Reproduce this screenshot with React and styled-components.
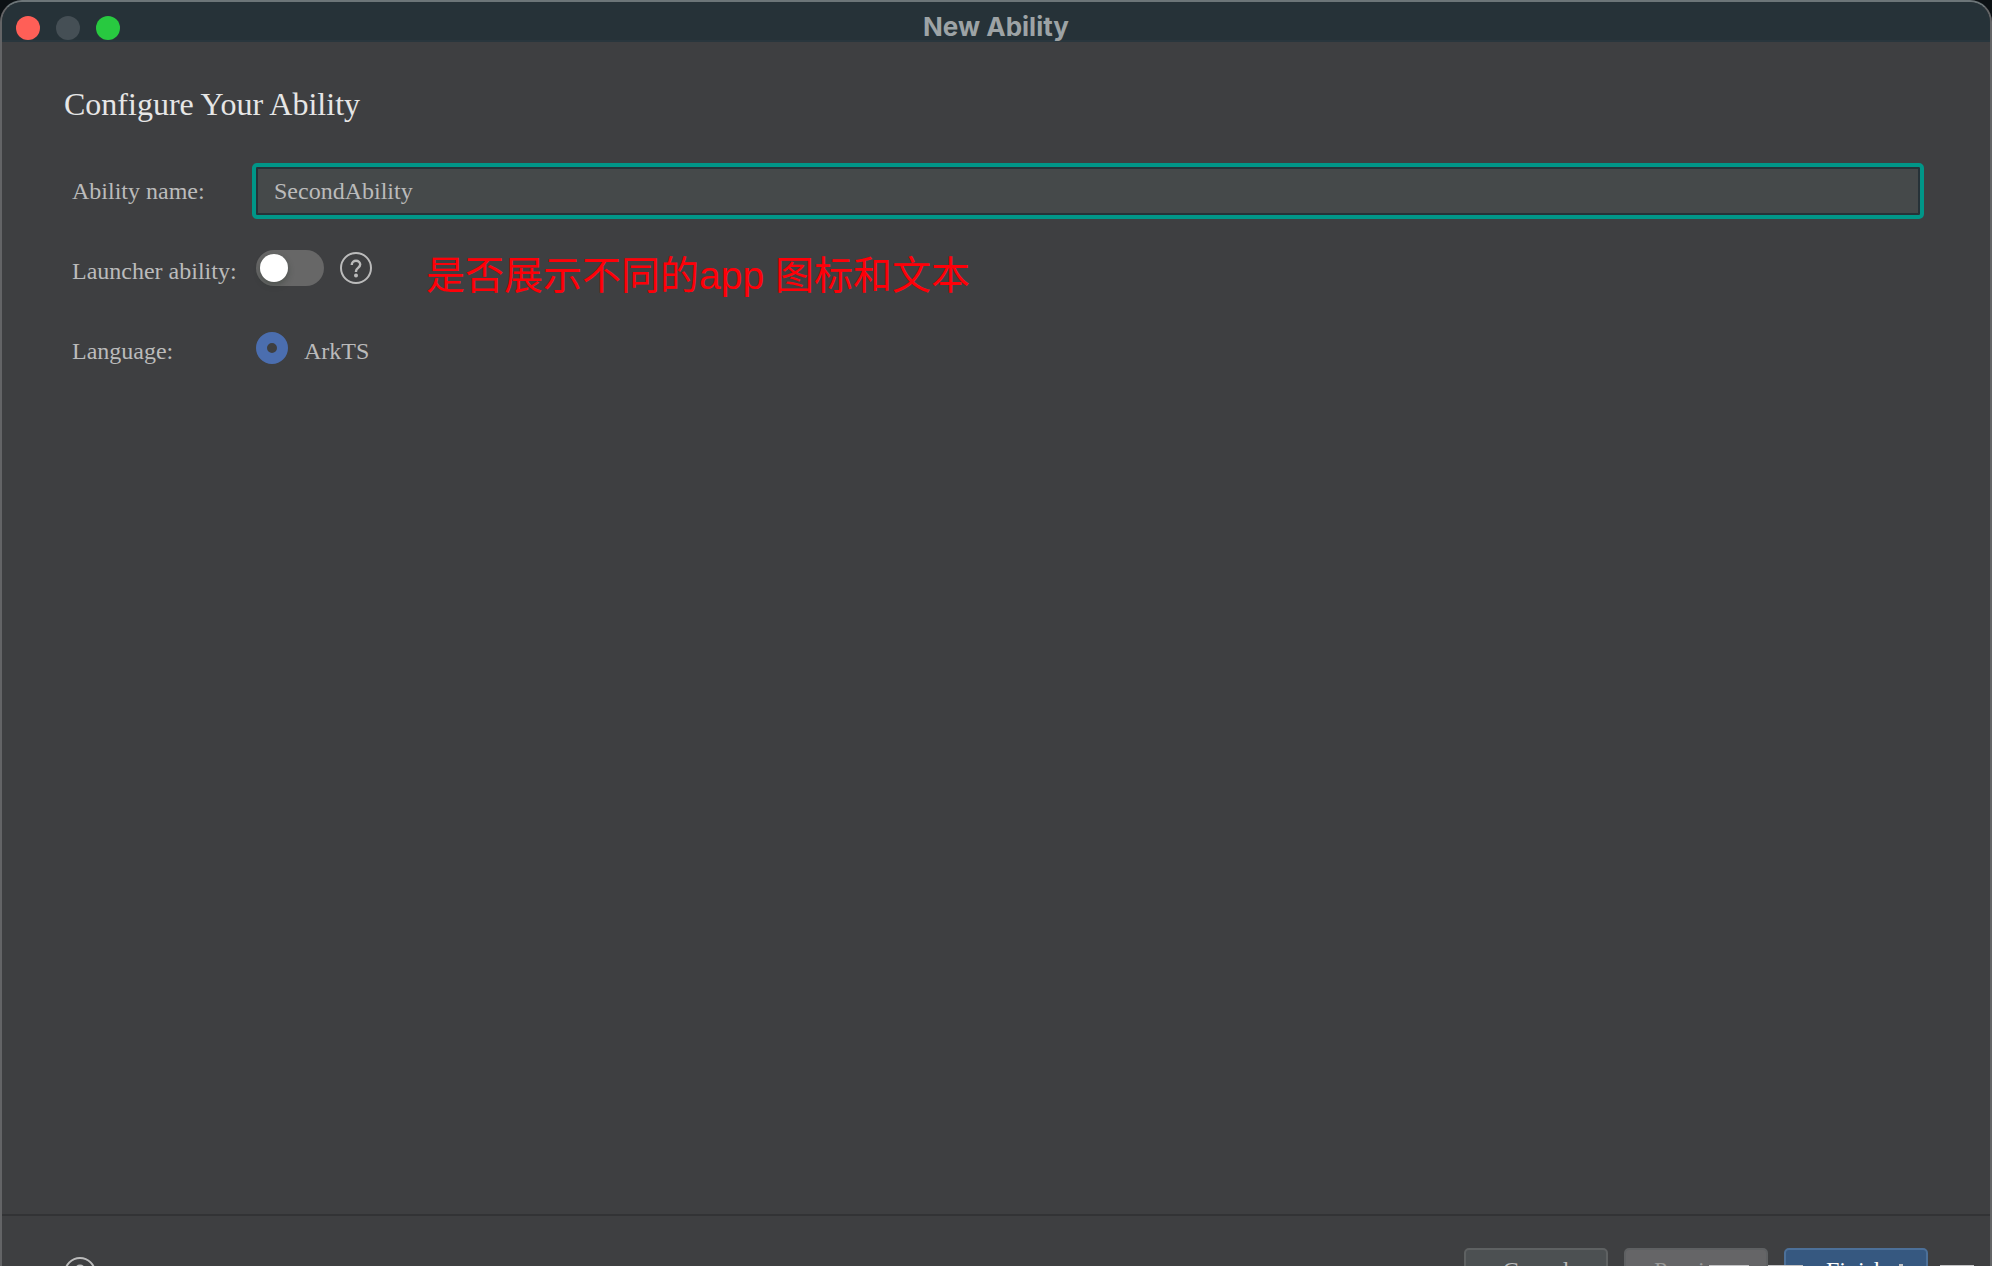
import React, { useState } from "react";
import styled, { createGlobalStyle } from "styled-components";

const serif = `"Liberation Serif", "Times New Roman", serif`;

const GlobalStyle = createGlobalStyle`
  * { box-sizing: border-box; }
  body { margin: 0; background: #0c1114; overflow: hidden; }
`;

const Dialog = styled.div`
  display: flex;
  flex-direction: column;
  height: 100vh;
  overflow: hidden;
  border: 2px solid #636466;
  border-top-color: #6c7578;
  border-bottom: 0;
  border-radius: 22px 22px 0 0;
  background: #3e3f41;
  color: #bbbbbb;
  font: 24px/28px ${serif};
`;

const TitleBar = styled.header`
  display: grid;
  grid-template-columns: 1fr auto 1fr;
  align-items: end;
  flex: none;
  height: 40px;
  padding: 0 14px;
  background: #263238;
  border-bottom: 2px solid #29363d;
`;

const TrafficLights = styled.div`
  display: flex;
  gap: 16px;
`;

const Light = styled.button`
  width: 24px;
  height: 24px;
  padding: 0;
  border: 0;
  border-radius: 50%;
  background: ${(p) => p.$color};
`;

const Title = styled.div`
  color: #9da3a5;
  font: 700 26px/26px Inter, sans-serif;
`;

const Form = styled.form`
  flex: 1;
  padding: 42px 66px 0 62px;
`;

const Heading = styled.h1`
  margin: 0 0 27px;
  color: #e6e6e6;
  font: 400 32px/40px ${serif};
`;

const Row = styled.div`
  display: grid;
  grid-template-columns: 180px 1fr;
  align-items: center;
  height: 80px;
  padding-left: 8px;
`;

const NameInput = styled.input`
  width: 100%;
  height: 56px;
  padding: 0 18px;
  border: 4px solid #009688;
  border-radius: 5px;
  outline: none;
  background: #45494a;
  box-shadow: inset 0 0 0 2px #263238;
  color: #bbbbbb;
  font: 24px/28px ${serif};
`;

const Controls = styled.div`
  display: flex;
  align-items: center;
  gap: 16px;
  padding: 0 0 6px 4px;
`;

const Switch = styled.input`
  appearance: none;
  display: flex;
  align-items: center;
  width: 68px;
  height: 36px;
  margin: 0;
  padding: 0 4px;
  border-radius: 18px;
  background: #676767;
  &::before {
    content: "";
    width: 28px;
    height: 28px;
    border-radius: 50%;
    background: #ffffff;
    box-shadow: 0 3px 6px rgba(38, 50, 40, 0.4);
  }
  &:checked {
    justify-content: flex-end;
    background: #009688;
  }
`;

const Radio = styled.input`
  appearance: none;
  width: 32px;
  height: 32px;
  margin: 0;
  border: 11px solid #4b6eaf;
  border-radius: 50%;
`;

const RadioLabel = styled.label`
  padding-top: 6px;
`;

const HelpButton = styled.button`
  display: block;
  width: 32px;
  height: 32px;
  padding: 0;
  border: 0;
  background: none;
  color: #bbbbbb;
`;

const Note = styled.p`
  margin: 0;
  padding: 16px 0 0 38px;
  color: #ff0008;
  font: 39px/48px "Liberation Sans", "Noto Sans CJK SC", sans-serif;
  white-space: nowrap;
`;

const Footer = styled.footer`
  position: relative;
  display: flex;
  justify-content: space-between;
  align-items: flex-start;
  flex: none;
  height: 52px;
  overflow: hidden;
  padding: 32px 62px 0;
  border-top: 2px solid #323335;
`;

const FooterHelp = styled.div`
  padding-top: 9px;
`;

const Actions = styled.div`
  display: flex;
  gap: 16px;
`;

const tones = {
  plain: { bg: "#4c5052", edge: "#5e6162", text: "#bbbbbb" },
  disabled: { bg: "#656567", edge: "#5e6062", text: "#999999" },
  primary: { bg: "#365880", edge: "#4c7099", text: "#ffffff" },
};

const ActionButton = styled.button`
  width: 144px;
  height: 44px;
  padding: 0;
  border: 2px solid ${(p) => tones[p.$tone].edge};
  border-radius: 5px;
  background: ${(p) => tones[p.$tone].bg};
  color: ${(p) => tones[p.$tone].text};
  font: 24px/28px ${serif};
`;

const Watermark = styled.svg`
  position: absolute;
  right: 0;
  bottom: 0;
`;

function HelpIcon() {
  return (
    <svg width="32" height="32" viewBox="0 0 32 32" fill="none" stroke="currentColor" strokeWidth="2" display="block" aria-hidden="true">
      <circle cx="16" cy="16" r="15" />
      <path d="M11.8 13V12.6a4.2 3.8 0 0 1 8.4 0c0 3.2-4.2 3.4-4.2 6.6v.8" strokeWidth="2.4" />
      <circle cx="16" cy="23.6" r="2" fill="currentColor" stroke="none" />
    </svg>
  );
}

export default function App() {
  const [name, setName] = useState("SecondAbility");
  return (
    <>
      <GlobalStyle />
      <Dialog>
        <TitleBar>
          <TrafficLights>
            <Light $color="#ff5f57" aria-label="Close" />
            <Light $color="#454f55" aria-label="Minimize" />
            <Light $color="#28c940" aria-label="Zoom" />
          </TrafficLights>
          <Title>New Ability</Title>
        </TitleBar>
        <Form onSubmit={(e) => e.preventDefault()}>
          <Heading>Configure Your Ability</Heading>
          <Row>
            <label htmlFor="name">Ability name:</label>
            <NameInput id="name" value={name} onChange={(e) => setName(e.target.value)} />
          </Row>
          <Row>
            <label htmlFor="launcher">Launcher ability:</label>
            <Controls>
              <Switch id="launcher" type="checkbox" role="switch" />
              <HelpButton type="button" aria-label="Help">
                <HelpIcon />
              </HelpButton>
              <Note>是否展示不同的app 图标和文本</Note>
            </Controls>
          </Row>
          <Row>
            <span>Language:</span>
            <Controls>
              <Radio id="arkts" type="radio" name="language" defaultChecked />
              <RadioLabel htmlFor="arkts">ArkTS</RadioLabel>
            </Controls>
          </Row>
        </Form>
        <Footer>
          <FooterHelp>
            <HelpButton type="button" aria-label="Help">
              <HelpIcon />
            </HelpButton>
          </FooterHelp>
          <Actions>
            <ActionButton type="button" $tone="plain">Cancel</ActionButton>
            <ActionButton type="button" $tone="disabled" disabled>Previous</ActionButton>
            <ActionButton type="button" $tone="primary">Finish</ActionButton>
          </Actions>
          <Watermark width="290" height="2" viewBox="1700 0 290 2" fill="#c4c4c6" aria-hidden="true">
            <path d="M1709 1h40v1h-40zM1768 1h35v1h-35zM1899 0h4v2h-4zM1940 1h34v1h-34z" />
          </Watermark>
        </Footer>
      </Dialog>
    </>
  );
}
